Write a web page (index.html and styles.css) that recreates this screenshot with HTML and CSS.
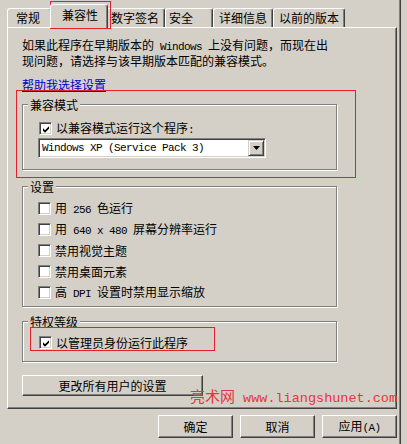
FILE: index.html
```html
<!DOCTYPE html>
<html lang="zh-CN">
<head>
<meta charset="utf-8">
<title>属性 - 兼容性</title>
<link rel="stylesheet" href="styles.css">
</head>
<body>
<div class="dialog">
  <div class="tabs">
    <div class="tab t-general">常规</div>
    <div class="tab sel t-compat">兼容性</div>
    <div class="tab t-sign">数字签名</div>
    <div class="tab t-sec">安全</div>
    <div class="tab t-detail">详细信息</div>
    <div class="tab t-prev">以前的版本</div>
  </div>
  <div class="panel">
    <p class="desc">如果此程序在早期版本的<span class="lat"> Windows </span>上没有问题，而现在出<br>现问题，请选择与该早期版本匹配的兼容模式。</p>
    <a class="link" href="#">帮助我选择设置</a>

    <div class="group g1">
      <div class="glabel">兼容模式</div>
      <label class="row row-compat">
        <span class="cb checked"><svg viewBox="0 0 9 9" width="9" height="9"><path d="M1 3.2 L3 5.2 L7 1.2 L7 3.8 L3 7.8 L1 5.8 Z" fill="#000"/></svg></span>
        <span class="txt">以兼容模式运行这个程序<span class="lat">:</span></span>
      </label>
      <div class="combo">
        <span class="combo-text lat">Windows XP (Service Pack 3)</span>
        <span class="combo-btn"><svg viewBox="0 0 7 4" width="7" height="4"><path d="M0 0 H7 L3.5 4 Z" fill="#000"/></svg></span>
      </div>
    </div>

    <div class="group g2">
      <div class="glabel">设置</div>
      <div class="rows">
        <label class="row"><span class="cb"></span><span class="txt">用<span class="lat"> 256 </span>色运行</span></label>
        <label class="row"><span class="cb"></span><span class="txt">用<span class="lat"> 640 x 480 </span>屏幕分辨率运行</span></label>
        <label class="row"><span class="cb"></span><span class="txt">禁用视觉主题</span></label>
        <label class="row"><span class="cb"></span><span class="txt">禁用桌面元素</span></label>
        <label class="row"><span class="cb"></span><span class="txt">高<span class="lat"> DPI </span>设置时禁用显示缩放</span></label>
      </div>
    </div>

    <div class="group g3">
      <div class="glabel">特权等级</div>
      <label class="row row-admin">
        <span class="cb checked"><svg viewBox="0 0 9 9" width="9" height="9"><path d="M1 3.2 L3 5.2 L7 1.2 L7 3.8 L3 7.8 L1 5.8 Z" fill="#000"/></svg></span>
        <span class="txt">以管理员身份运行此程序</span>
      </label>
    </div>

    <button class="btn btn-all">更改所有用户的设置</button>
  </div>
  <div class="actions">
    <button class="btn btn-act">确定</button>
    <button class="btn btn-act">取消</button>
    <button class="btn btn-act">应用<span class="lat">(A)</span></button>
  </div>

  <div class="mark mark-tab"></div>
  <div class="mark mark-compat"></div>
  <div class="mark mark-admin"></div>
  <div class="watermark"><span class="wm-cn">亮术网</span><span class="wm-en"> www.liangshunet.com</span></div>
  <div class="frame"></div>
</div>
</body>
</html>
```

FILE: styles.css
```css
* { box-sizing: border-box; }

html, body {
  margin: 0;
  padding: 0;
  background: #d4d0c8;
}

body {
  width: 407px;
  height: 444px;
  overflow: hidden;
  font-family: "Noto Sans CJK SC", "Noto Sans", sans-serif;
  font-size: 12px;
  color: #000;
}

.dialog {
  position: relative;
  width: 407px;
  height: 444px;
}

.lat {
  font-family: "Liberation Mono", "DejaVu Sans Mono", monospace;
  font-size: 11px;
  letter-spacing: -0.6px;
}

/* ---------- tabs ---------- */
.tabs {
  display: flex;
  align-items: flex-end;
  height: 27px;
  padding-left: 7px;
}

.tab {
  height: 19px;
  border: 1px solid #fff;
  border-right-color: #404040;
  border-bottom: none;
  border-radius: 3px 3px 0 0;
  box-shadow: inset -1px 0 0 #808080;
  line-height: 17px;
  padding-left: 5px;
  white-space: nowrap;
  background: #d4d0c8;
}

.tab.sel {
  position: relative;
  z-index: 2;
  height: 24px;
  margin: 0 -2px -1px -2px;
  line-height: 20px;
}

.t-general { width: 45px; padding-left: 8px; }
.t-compat { width: 58px; padding-left: 11px; }
.t-sign { width: 59px; padding-left: 4px; }
.t-sec { width: 48px; padding-left: 3px; }
.t-detail { width: 60px; padding-left: 5px; }
.t-prev { width: 72px; padding-left: 5px; }

/* ---------- panel ---------- */
.panel {
  margin-left: 7px;
  width: 390px;
  height: 382px;
  border: 1px solid #fff;
  border-right-color: #404040;
  border-bottom-color: #404040;
  box-shadow: inset -1px -1px 0 #808080;
  padding: 10px 0 0 14px;
}

.desc {
  margin: 0;
  line-height: 13px;
  white-space: nowrap;
}

.link {
  display: block;
  width: fit-content;
  margin-top: 11px;
  line-height: 13px;
  color: #0000cc;
  text-decoration: underline;
  text-underline-offset: 1px;
}

/* ---------- group boxes ---------- */
.group {
  width: 315px;
  border: 1px solid #808080;
  box-shadow: 1px 1px 0 #fff, inset 1px 1px 0 #fff;
}

.glabel {
  width: fit-content;
  margin: -7px 0 0 5px;
  padding: 0 2px;
  line-height: 13px;
  background: #d4d0c8;
}

.g1 { margin-top: 13px; }
.g2 { margin-top: 16px; }
.g3 { margin-top: 14px; }

.row {
  display: flex;
  align-items: center;
  gap: 4px;
  height: 21px;
  margin-left: 16px;
  line-height: 13px;
  white-space: nowrap;
}

.row-compat {
  height: 13px;
  margin-top: 11px;
}

.rows {
  margin-top: 5px;
  margin-bottom: 3px;
  margin-left: -1px;
}

.row-admin {
  margin-top: 4px;
  margin-bottom: 8px;
}

.cb {
  flex: none;
  display: flex;
  align-items: center;
  justify-content: center;
  width: 13px;
  height: 13px;
  background: #fff;
  border: 1px solid #808080;
  border-right-color: #fff;
  border-bottom-color: #fff;
  box-shadow: inset 1px 1px 0 #404040, inset -1px -1px 0 #d4d0c8;
}

.cb svg { display: block; margin: 1px 0 0 1px; }

/* ---------- combo ---------- */
.combo {
  display: flex;
  align-items: stretch;
  width: 228px;
  height: 20px;
  margin: 3px 0 11px 15px;
  background: #fff;
  border: 1px solid #808080;
  border-right-color: #fff;
  border-bottom-color: #fff;
  box-shadow: inset 1px 1px 0 #404040, inset -1px -1px 0 #d4d0c8;
  padding: 1px;
}

.combo-text {
  flex: 1;
  padding-left: 2px;
  line-height: 16px;
  white-space: nowrap;
}

.combo-btn {
  flex: none;
  display: flex;
  align-items: center;
  justify-content: center;
  width: 16px;
  background: #d4d0c8;
  border: 1px solid #d4d0c8;
  border-right-color: #404040;
  border-bottom-color: #404040;
  box-shadow: inset 1px 1px 0 #fff, inset -1px -1px 0 #808080;
}

/* ---------- buttons ---------- */
.btn {
  display: block;
  font-family: "Noto Sans CJK SC", "Noto Sans", sans-serif;
  font-size: 12px;
  color: #000;
  background: #d4d0c8;
  border: 1px solid #fff;
  border-right-color: #404040;
  border-bottom-color: #404040;
  box-shadow: inset -1px -1px 0 #808080;
  padding: 0;
  line-height: 13px;
}

.btn-all {
  width: 181px;
  height: 21px;
  margin-top: 13px;
}

.actions {
  display: flex;
  justify-content: flex-end;
  gap: 7px;
  width: 397px;
  margin-top: 6px;
}

.btn-act {
  width: 75px;
  height: 23px;
}

/* ---------- overlays ---------- */
.mark {
  position: absolute;
  border: 1px solid #e3202c;
}

.mark-tab { left: 50px; top: 1px; width: 61px; height: 28px; }
.mark-compat { left: 16px; top: 90px; width: 340px; height: 88px; }
.mark-admin { left: 30px; top: 327px; width: 185px; height: 24px; }

.watermark {
  position: absolute;
  left: 190px;
  top: 387px;
  color: #e8343c;
  white-space: nowrap;
  line-height: 18px;
}

.wm-cn {
  font-family: "Noto Sans CJK SC", sans-serif;
  font-size: 15px;
}

.wm-en {
  font-family: "Liberation Mono", "Courier New", monospace;
  font-size: 13.5px;
}

.frame {
  position: absolute;
  top: 0;
  left: 399px;
  width: 2px;
  height: 444px;
  border-left: 1px solid #808080;
  border-right: 1px solid #404040;
}
```
